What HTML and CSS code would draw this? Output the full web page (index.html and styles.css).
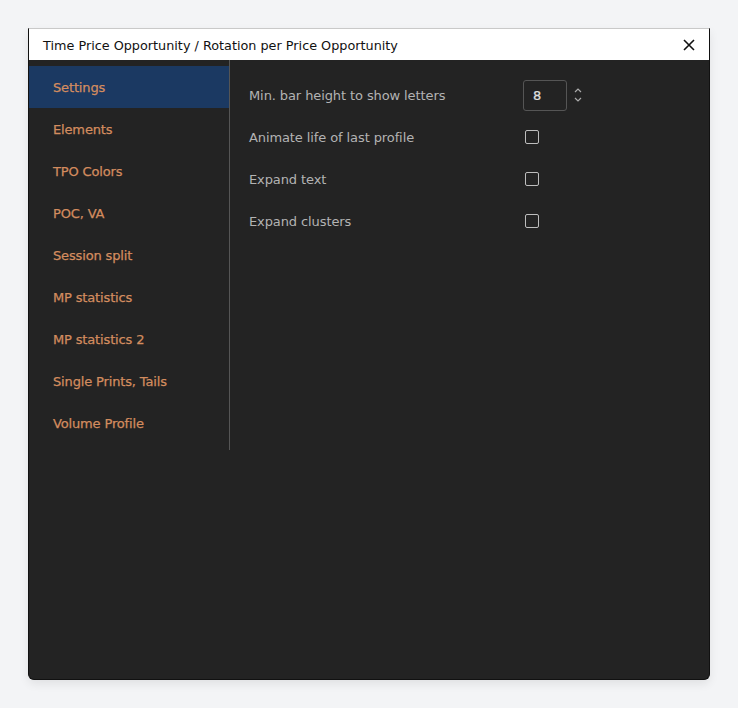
FILE: index.html
```html
<!DOCTYPE html>
<html lang="en">
<head>
  <meta charset="UTF-8" />
  <title>Time Price Opportunity</title>
  <link rel="stylesheet" href="styles.css">
</head>
<body>

<div class="dialog">
  <div class="titlebar">
    <span class="title">Time Price Opportunity / Rotation per Price Opportunity</span>
    <button class="close-btn" aria-label="Close">
      <svg width="12" height="12" viewBox="0 0 12 12"><path d="M1 1L11 11M11 1L1 11" stroke="#111" stroke-width="1.6" fill="none"/></svg>
    </button>
  </div>

  <div class="dialog-body">
    <ul class="tabs">
      <li class="tab active">Settings</li>
      <li class="tab">Elements</li>
      <li class="tab">TPO Colors</li>
      <li class="tab">POC, VA</li>
      <li class="tab">Session split</li>
      <li class="tab">MP statistics</li>
      <li class="tab">MP statistics 2</li>
      <li class="tab">Single Prints, Tails</li>
      <li class="tab">Volume Profile</li>
    </ul>

    <div class="settings">
      <div class="row">
        <label class="label">Min. bar height to show letters</label>
        <div class="spinner">
          <div class="num-input">8</div>
          <div class="arrows">
            <svg width="10" height="20" viewBox="0 0 10 20"><path d="M2 7L5 4L8 7M2 13L5 16L8 13" stroke="#aaa" stroke-width="1.2" fill="none"/></svg>
          </div>
        </div>
      </div>
      <div class="row">
        <label class="label">Animate life of last profile</label>
        <span class="checkbox"></span>
      </div>
      <div class="row">
        <label class="label">Expand text</label>
        <span class="checkbox"></span>
      </div>
      <div class="row">
        <label class="label">Expand clusters</label>
        <span class="checkbox"></span>
      </div>
    </div>
  </div>
</div>

</body>
</html>
```

FILE: styles.css
```css
body { margin: 0; padding: 28px; background: #f3f4f6; font-family: "DejaVu Sans", Verdana, sans-serif; }
.dialog { width: 682px; height: 652px; box-sizing: border-box; background: #232323; border: 1px solid #111; border-top-color: #c9c9c9; border-radius: 0 0 6px 6px; box-shadow: 0 4px 10px rgba(0,0,0,0.08); display: flex; flex-direction: column; overflow: hidden; }
.titlebar { height: 31px; box-sizing: border-box; padding: 1px 12px 0 14px; background: #fff; display: flex; align-items: center; justify-content: space-between; flex-shrink: 0; }
.title { font-size: 12.8px; color: #111; }
.close-btn { background: none; border: none; padding: 0; width: 16px; height: 16px; display: flex; align-items: center; justify-content: center; cursor: pointer; }
.dialog-body { display: flex; flex: 1; align-items: flex-start; }
.tabs { list-style: none; margin: 0; padding: 6px 0; width: 200px; border-right: 1px solid #555; }
.tab { height: 42px; box-sizing: border-box; padding: 2px 0 0 24px; line-height: 40px; color: #d38c5f; font-size: 13px; letter-spacing: -0.15px; -webkit-text-stroke: 0.25px #d38c5f; cursor: pointer; }
.tab.active { background: #1b3962; }
.settings { padding: 14px 0 0 19px; }
.row { height: 42px; display: flex; align-items: center; }
.label { width: 274px; color: #b3b3b3; font-size: 13px; letter-spacing: -0.1px; }
.spinner { display: flex; align-items: center; gap: 6px; }
.num-input { width: 44px; height: 31px; box-sizing: border-box; border: 1px solid #555; border-radius: 3px; color: #e0e0e0; font-size: 13px; line-height: 29px; padding-left: 9px; -webkit-text-stroke: 0.2px #e0e0e0; }
.arrows { display: flex; align-items: center; }
.checkbox { width: 14px; height: 14px; box-sizing: border-box; border: 1.5px solid #bdbdbd; border-radius: 2px; margin-left: 2px; }
```
